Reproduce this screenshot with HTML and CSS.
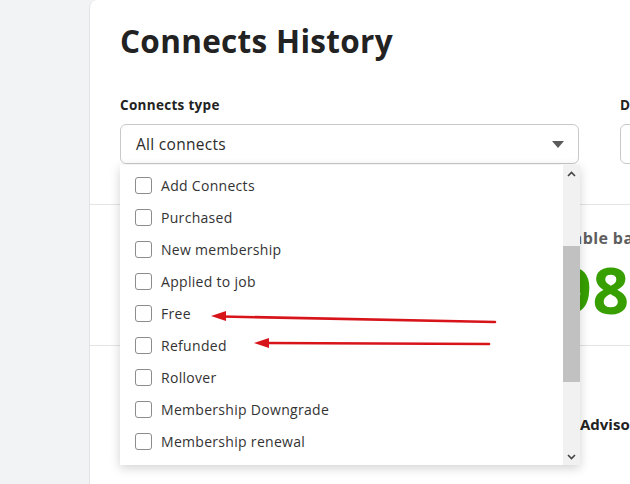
FILE: index.html
```html
<!DOCTYPE html>
<html lang="en">
<head>
<meta charset="utf-8">
<title>Connects History</title>
<link rel="stylesheet" href="styles.css">
</head>
<body>
<div class="page">
  <aside class="sidebar"></aside>
  <main class="card">
    <section class="head">
      <h1 class="title">Connects History</h1>
      <div class="filters">
        <div class="field">
          <label class="label">Connects type</label>
          <div class="select">
            <span>All connects</span>
            <span class="caret"></span>
          </div>
          <div class="menu">
            <ul class="options">
              <li><span class="box"></span>Add Connects</li>
              <li><span class="box"></span>Purchased</li>
              <li><span class="box"></span>New membership</li>
              <li><span class="box"></span>Applied to job</li>
              <li><span class="box"></span>Free</li>
              <li><span class="box"></span>Refunded</li>
              <li><span class="box"></span>Rollover</li>
              <li><span class="box"></span>Membership Downgrade</li>
              <li><span class="box"></span>Membership renewal</li>
            </ul>
            <div class="scrollbar">
              <span class="sb-arrow">
                <svg width="9" height="6" viewBox="0 0 9 6"><path d="M1 5 L4.5 1.5 L8 5" fill="none" stroke="#444" stroke-width="1.6"/></svg>
              </span>
              <div class="sb-track"><div class="sb-thumb"></div></div>
              <span class="sb-arrow">
                <svg width="9" height="6" viewBox="0 0 9 6"><path d="M1 1 L4.5 4.5 L8 1" fill="none" stroke="#444" stroke-width="1.6"/></svg>
              </span>
            </div>
          </div>
        </div>
        <div class="field">
          <label class="label">Date range</label>
          <div class="select select-2"><span>Last 30 days</span></div>
        </div>
      </div>
    </section>
    <section class="balance">
      <div class="bal-col">
        <div class="bal-label">Available balance</div>
        <div class="bal-value">98</div>
      </div>
    </section>
    <section class="advisory">
      <div class="adv-col">Advisory</div>
    </section>
  </main>
</div>
<svg class="annot" width="630" height="484" viewBox="0 0 630 484">
  <line x1="495" y1="322" x2="222" y2="316.5" stroke="#d8141b" stroke-width="2.6" stroke-linecap="round"/>
  <polygon points="211,316 226,311 226,321" fill="#d8141b"/>
  <line x1="489" y1="344" x2="265" y2="343" stroke="#d8141b" stroke-width="2.6" stroke-linecap="round"/>
  <polygon points="254,343 269,338 269,348" fill="#d8141b"/>
</svg>
</body>
</html>
```

FILE: styles.css
```css
* { box-sizing: border-box; }
html, body {
  margin: 0;
  padding: 0;
  width: 630px;
  height: 484px;
  overflow: hidden;
}
body {
  background: #f2f3f5;
  font-family: "Open Sans", "DejaVu Sans", sans-serif;
  color: #1f1f1f;
  position: relative;
}
.page {
  display: flex;
  height: 484px;
}
.sidebar {
  width: 89px;
  flex: none;
}
.card {
  flex: 1;
  background: #fff;
  border-left: 1px solid #e2e3e5;
  border-top-left-radius: 8px;
  min-width: 0;
  overflow: hidden;
}
.head {
  padding: 19px 0 0 30px;
  border-bottom: 1px solid #e4e4e4;
  height: 205px;
}
.title {
  margin: 0;
  font-size: 31.5px;
  line-height: 44px;
  font-weight: 700;
  color: #222;
  letter-spacing: 0.3px;
}
.filters {
  display: grid;
  grid-template-columns: 459px 300px;
  column-gap: 41px;
  margin-top: 33px;
}
.field {
  position: relative;
}
.label {
  display: block;
  font-size: 13.5px;
  line-height: 18px;
  font-weight: 700;
  color: #222;
  letter-spacing: 0.3px;
  margin-bottom: 10px;
}
.select {
  height: 40px;
  border: 1px solid #c9c9c9;
  border-radius: 6px;
  display: flex;
  align-items: center;
  justify-content: space-between;
  padding: 0 14px 0 15px;
  font-size: 15.5px;
  letter-spacing: 0.3px;
  color: #2b2b2b;
  white-space: nowrap;
  overflow: hidden;
}
.caret {
  width: 0;
  height: 0;
  border-left: 6px solid transparent;
  border-right: 6px solid transparent;
  border-top: 7px solid #5a5a5a;
}
.menu {
  position: absolute;
  left: 0;
  top: 69px;
  width: 460px;
  height: 300px;
  background: #fff;
  box-shadow: 0 3px 10px rgba(0,0,0,0.18);
  display: flex;
  z-index: 5;
}
.options {
  list-style: none;
  margin: 0;
  padding: 4px 0 0 0;
  flex: 1;
}
.options li {
  height: 32px;
  display: flex;
  align-items: center;
  padding-left: 15px;
  font-size: 14px;
  letter-spacing: 0.3px;
  color: #333;
}
.box {
  width: 17px;
  height: 17px;
  border: 1px solid #8c8c8c;
  border-radius: 3px;
  margin-right: 9px;
  flex: none;
}
.scrollbar {
  width: 17px;
  background: #f1f1f1;
  display: flex;
  flex-direction: column;
}
.sb-arrow {
  height: 17px;
  display: flex;
  align-items: center;
  justify-content: center;
}
.sb-track {
  flex: 1;
  padding-top: 64px;
}
.sb-thumb {
  height: 136px;
  background: #c1c1c1;
}
.balance {
  height: 141px;
  border-bottom: 1px solid #e4e4e4;
  padding-left: 441px;
}
.bal-col {
  padding-top: 23px;
}
.bal-label {
  font-size: 16px;
  font-weight: 700;
  color: #5e5e5e;
  line-height: 20px;
  letter-spacing: 0.4px;
  white-space: nowrap;
}
.bal-value {
  font-size: 64px;
  line-height: 70px;
  font-weight: 700;
  color: #37a000;
  margin-top: 7px;
  margin-left: 24px;
  letter-spacing: 1px;
  white-space: nowrap;
}
.advisory {
  padding: 68px 0 0 490px;
}
.adv-col {
  font-size: 15px;
  font-weight: 700;
  color: #222;
  white-space: nowrap;
}
.annot {
  position: absolute;
  left: 0;
  top: 0;
  z-index: 10;
  pointer-events: none;
}
```
